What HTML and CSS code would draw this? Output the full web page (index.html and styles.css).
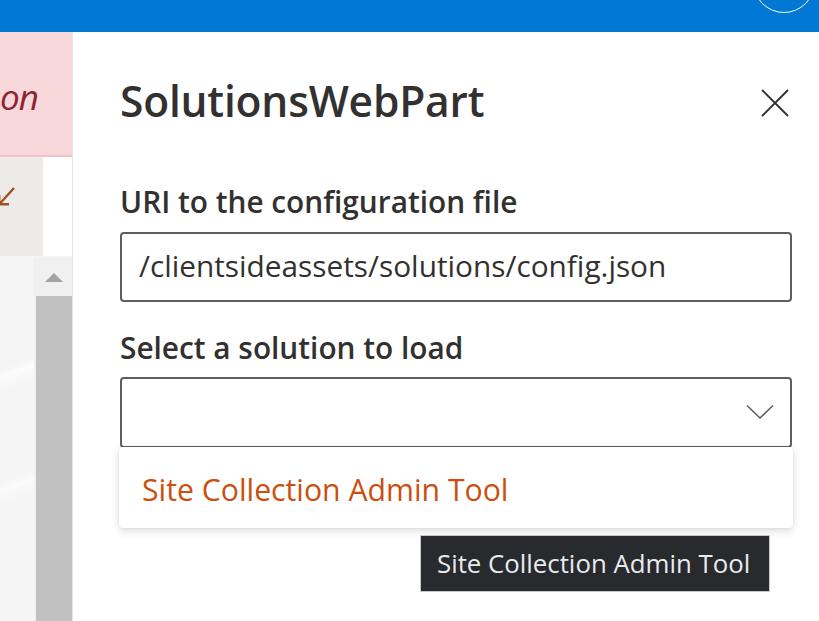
FILE: index.html
```html
<!DOCTYPE html>
<html lang="en">
<head>
<meta charset="utf-8">
<title>SolutionsWebPart</title>
<link rel="stylesheet" href="styles.css">
</head>
<body>
<header class="topbar">
  <span class="avatar"></span>
</header>
<div class="main">
  <aside class="canvas">
    <div class="alert"><span class="alert-text">on</span></div>
    <div class="toolbar">
      <div class="toolbar-left">
        <svg class="arrow" width="18" height="22" viewBox="0 0 18 22"><path d="M16 2 L1.5 18 M1.2 9 V18.3 H11" fill="none" stroke="#a4501e" stroke-width="2.4"/></svg>
      </div>
      <div class="toolbar-white"></div>
    </div>
    <div class="scrollarea">
      <div class="sheen"></div>
      <div class="scrollbar">
        <div class="sb-up"><span class="tri"></span></div>
        <div class="sb-thumb"></div>
      </div>
    </div>
  </aside>
  <section class="panel">
    <div class="panel-head">
      <h1 class="title">SolutionsWebPart</h1>
      <button class="close" aria-label="Close">
        <svg width="28" height="28" viewBox="0 0 28 28"><path d="M1 1 L27 27 M27 1 L1 27" stroke="#323130" stroke-width="1.9" fill="none"/></svg>
      </button>
    </div>
    <div class="field field-first">
      <label class="label">URI to the configuration file</label>
      <div class="textfield">/clientsideassets/solutions/config.json</div>
    </div>
    <div class="field field-second">
      <label class="label">Select a solution to load</label>
      <div class="dropdown">
        <svg class="chevron" width="28" height="16" viewBox="0 0 28 16"><path d="M1 1.5 L14 14 L27 1.5" stroke="#605e5c" stroke-width="1.6" fill="none"/></svg>
        <div class="callout">
          <div class="option">Site Collection Admin Tool</div>
        </div>
      </div>
    </div>
    <div class="tooltip">Site Collection Admin Tool</div>
  </section>
</div>
</body>
</html>
```
FILE: styles.css
```css
* { box-sizing: border-box; }
html, body { margin: 0; padding: 0; }
body {
  width: 819px;
  height: 621px;
  overflow: hidden;
  font-family: "Open Sans", "Noto Sans", sans-serif;
  color: #323130;
  background: #fff;
}
.topbar {
  position: relative;
  height: 32px;
  background: #0078d4;
  overflow: hidden;
}
.avatar {
  position: absolute;
  left: 753px;
  top: -49px;
  width: 62px;
  height: 62px;
  border: 1.5px solid #fff;
  border-radius: 50%;
}
.main {
  display: flex;
  height: 589px;
}
.canvas {
  width: 73px;
  flex: none;
  display: flex;
  flex-direction: column;
  border-right: 1px solid #e6e6e6;
  overflow: hidden;
}
.alert {
  height: 125px;
  background: #f8d7da;
  border-bottom: 2px solid #f3c2c7;
  display: flex;
  align-items: center;
  justify-content: flex-start;
  padding-left: 0;
}
.alert-text {
  font-style: italic;
  font-size: 35px;
  letter-spacing: -1px;
  color: #8e2432;
  white-space: nowrap;
  margin-top: 6px;
}
.toolbar {
  height: 100px;
  display: flex;
  border-bottom: 1px solid #f4f4f4;
}
.toolbar-left {
  width: 43px;
  background: #edebe9;
  overflow: hidden;
  padding-top: 29px;
}
.arrow { display: block; margin-left: -2px; }
.toolbar-white { flex: 1; background: #fff; }
.scrollarea {
  flex: 1;
  display: flex;
}
.sheen {
  width: 36px;
  background:
    linear-gradient(160deg, transparent 0 30%, rgba(255,255,255,.7) 32%, transparent 36%, transparent 60%, rgba(255,255,255,.6) 62%, transparent 66%),
    #f5f5f5;
  border-right: 2px solid #f0f0f0;
}
.scrollbar {
  flex: 1;
  display: flex;
  flex-direction: column;
  background: #f0f0f0;
}
.sb-up {
  height: 39px;
  display: flex;
  align-items: center;
  justify-content: center;
}
.tri {
  width: 0;
  height: 0;
  border-left: 9px solid transparent;
  border-right: 9px solid transparent;
  border-bottom: 9px solid #a3a3a3;
  margin-top: 2px;
}
.sb-thumb { flex: 1; background: #c1c1c1; }

.panel {
  position: relative;
  flex: 1;
  padding: 39px 27px 0 47px;
}
.panel-head {
  display: flex;
  align-items: center;
  justify-content: space-between;
  height: 60px;
}
.title {
  margin: 0;
  font-size: 42.5px;
  font-weight: 600;
  line-height: 60px;
  letter-spacing: -0.2px;
}
.close {
  border: 0;
  background: none;
  padding: 0;
  margin: 4px 3px 0 0;
  width: 28px;
  height: 28px;
}
.close svg { display: block; }
.field { display: flex; flex-direction: column; }
.field-first { margin-top: 51px; }
.field-second { margin-top: 26px; }
.label {
  font-size: 29.8px;
  font-weight: 600;
  line-height: 40px;
  height: 40px;
}
.textfield {
  margin-top: 10px;
  height: 70px;
  border: 2px solid #605e5c;
  border-radius: 4px;
  padding: 0 0 0 17px;
  font-size: 29.8px;
  line-height: 64px;
  white-space: nowrap;
}
.dropdown {
  position: relative;
  margin-top: 9px;
  height: 71px;
  border: 2px solid #605e5c;
  border-radius: 4px;
}
.chevron {
  position: absolute;
  right: 16px;
  top: 25px;
}
.callout {
  position: absolute;
  left: -3px;
  right: -3px;
  top: calc(100% + 1px);
  height: 81px;
  background: #fff;
  border-radius: 4px;
  box-shadow: 0 3px 9px rgba(0,0,0,.14), 0 0 2px rgba(0,0,0,.08);
  display: flex;
  align-items: center;
  padding: 3px 0 0 23px;
}
.option {
  font-size: 30.2px;
  color: #ca5010;
  white-space: nowrap;
}
.tooltip {
  position: absolute;
  left: 347px;
  top: 503px;
  width: 350px;
  height: 57px;
  background: #292a2d;
  border: 1px solid #c8c8c8;
  color: #e8eaed;
  font-size: 25.8px;
  line-height: 55px;
  padding-left: 16px;
  white-space: nowrap;
}
```
